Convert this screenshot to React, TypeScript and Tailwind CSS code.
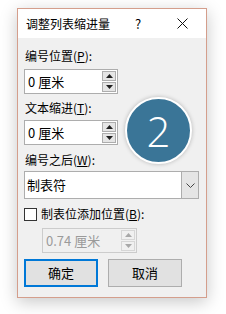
import React from 'react';

const font = { fontFamily: '"Noto Sans CJK SC", "Noto Sans", sans-serif' };

function Arrow({ up, disabled }: { up?: boolean; disabled?: boolean }) {
  return (
    <svg width="7" height="4" viewBox="0 0 7 4">
      <path d={up ? 'M0 4 L3.5 0 L7 4 Z' : 'M0 0 L3.5 4 L7 0 Z'} fill={disabled ? '#a8a8a8' : '#202020'} />
    </svg>
  );
}

function Spin({ value, disabled, width }: { value: string; disabled?: boolean; width: string }) {
  return (
    <div
      className={`flex h-[25px] ${width} items-center border ${disabled ? 'border-[#cccccc] bg-[#f0f0f0] text-[#9a9a9a]' : 'border-[#adadad] bg-white text-black'}`}
    >
      <span className="flex-1 pl-[3px] text-[13px] leading-none">{value}</span>
      <div className="mr-[1px] flex flex-col gap-[1px]">
        <div className={`flex h-[10px] w-[14px] items-center justify-center border ${disabled ? 'border-[#d6d6d6] bg-[#f0f0f0]' : 'border-[#adadad] bg-[#e5e5e5]'}`}>
          <Arrow up disabled={disabled} />
        </div>
        <div className={`flex h-[10px] w-[14px] items-center justify-center border ${disabled ? 'border-[#d6d6d6] bg-[#f0f0f0]' : 'border-[#adadad] bg-[#e5e5e5]'}`}>
          <Arrow disabled={disabled} />
        </div>
      </div>
    </div>
  );
}

export default function App() {
  return (
    <div className="relative h-[314px] w-[226px] overflow-hidden bg-white pl-[17px] pt-[8px]" style={font}>
      <div className="flex h-[290px] w-[190px] flex-col border border-[#d49e8c] bg-[#f0f0f0] shadow-[0_4px_16px_rgba(0,0,0,0.22)]">
        {/* title bar */}
        <div className="flex h-[29px] items-center bg-white pl-[8px] text-[12px] text-black">
          <span className="w-[109px]">调整列表缩进量</span>
          <span className="w-[42px] text-[13px]">?</span>
          <svg width="11" height="11" viewBox="0 0 11 11">
            <path d="M0.5 0.5 L10.5 10.5 M10.5 0.5 L0.5 10.5" stroke="#111" strokeWidth="1" />
          </svg>
        </div>

        <div className="flex flex-col pl-[6px] pt-[10px] text-[12px] text-black">
          <div className="h-[16px] pl-[1px] leading-[16px]">
            编号位置(<span className="underline">P</span>):
          </div>
          <div className="mt-[5px]">
            <Spin value="0 厘米" width="w-[94px]" />
          </div>

          <div className="mt-[6px] h-[16px] pl-[1px] leading-[16px]">
            文本缩进(<span className="underline">T</span>):
          </div>
          <div className="mt-[4px]">
            <Spin value="0 厘米" width="w-[94px]" />
          </div>

          <div className="mt-[7px] h-[16px] pl-[1px] leading-[16px]">
            编号之后(<span className="underline">W</span>):
          </div>
          <div className="mt-[3px] flex h-[28px] w-[175px] items-center border border-[#adadad] bg-white">
            <span className="flex-1 pl-[2px] text-[13px]">制表符</span>
            <div className="flex h-full w-[17px] items-center justify-center border-l border-[#adadad] bg-[#e5e5e5]">
              <svg width="9" height="5" viewBox="0 0 9 5">
                <path d="M0.5 0.5 L4.5 4.5 L8.5 0.5" stroke="#444" strokeWidth="1" fill="none" />
              </svg>
            </div>
          </div>

          <div className="mt-[7px] flex h-[16px] items-center gap-[4px]">
            <div className="h-[13px] w-[13px] border border-[#333] bg-white" />
            <span className="leading-[16px]">
              制表位添加位置(<span className="underline">B</span>):
            </span>
          </div>
          <div className="mt-[6px] pl-[18px]">
            <Spin value="0.74 厘米" width="w-[95px]" disabled />
          </div>

          <div className="mt-[6px] flex gap-[10px]">
            <button className="flex h-[28px] w-[74px] items-center justify-center border-2 border-[#0078d7] bg-[#e1e1e1] text-[13px]">
              确定
            </button>
            <button className="flex h-[28px] w-[74px] items-center justify-center border border-[#adadad] bg-[#e1e1e1] text-[13px]">
              取消
            </button>
          </div>
        </div>
      </div>

      {/* step badge */}
      <div className="absolute left-[125px] top-[97px] flex h-[67px] w-[67px] items-center justify-center rounded-full border-2 border-white bg-[#3a7597] shadow-[0_0_4px_rgba(0,0,0,0.25)]">
        <span className="text-[42px] font-light leading-none text-white" style={{ fontFamily: '"Open Sans", sans-serif' }}>
          2
        </span>
      </div>
    </div>
  );
}
